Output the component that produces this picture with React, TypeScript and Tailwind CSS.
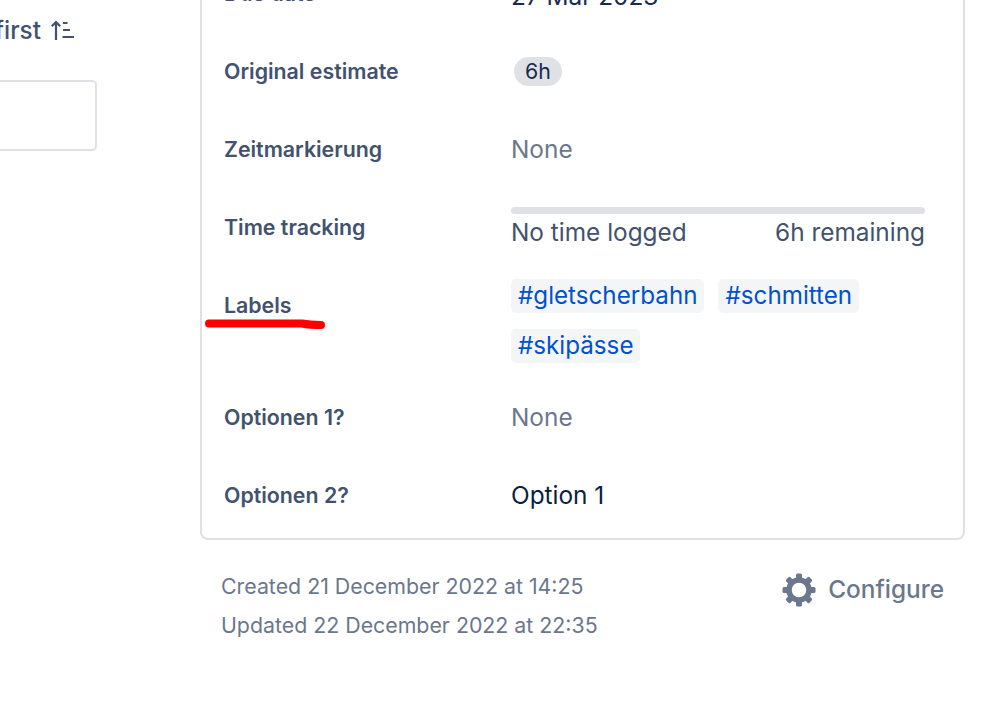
const font = { fontFamily: "Inter, 'Noto Sans', sans-serif" };

function GearIcon() {
  return (
    <svg width="34" height="34" viewBox="0 0 34 34" className="shrink-0 text-[#6b778c]">
      <circle cx="17" cy="17" r="10" fill="none" stroke="currentColor" strokeWidth="5.5" />
      {[0, 45, 90, 135, 180, 225, 270, 315].map((deg) => (
        <rect key={deg} x="14" y="0.5" width="6" height="6" rx="1.5" fill="currentColor" transform={`rotate(${deg} 17 17)`} />
      ))}
    </svg>
  );
}

function SortIcon() {
  return (
    <svg width="25" height="22" viewBox="0 0 25 22" fill="none" stroke="#42526e" strokeWidth="2.2" className="shrink-0">
      <path d="M6 21V3M1.8 7.2L6 3l4.2 4.2" />
      <path d="M13 4h4.5M13 11h7M12.5 18h11.5" />
    </svg>
  );
}

function Row({ label, children, className }: { label: string; children: React.ReactNode; className: string }) {
  return (
    <div className={`flex ${className}`}>
      <div className="w-[287px] shrink-0 text-[21.33px] font-semibold leading-[28px] text-[#42526e]">{label}</div>
      <div className="min-w-0 flex-1">{children}</div>
    </div>
  );
}

function Tag({ children }: { children: string }) {
  return <span className="rounded-[5px] bg-[#f4f5f7] px-[7px] text-[24.2px] leading-[34px] text-[#0052cc]">{children}</span>;
}

export default function App() {
  return (
    <div style={font} className="flex h-[710px] w-[999px] overflow-hidden bg-white">
      <div className="w-[200px] shrink-0 overflow-hidden pt-[14px]">
        <div className="mr-[125px] flex items-center justify-end gap-[9px]">
          <span className="whitespace-nowrap text-[24.38px] font-medium leading-[32px] text-[#42526e]">Oldest first</span>
          <SortIcon />
        </div>
        <div className="ml-[-20px] mt-[34px] h-[71px] w-[117px] rounded-[5px] border-2 border-[#dfe1e6]" />
      </div>
      <div className="w-[765px] shrink-0">
        <div className="-mt-[61px] h-[601px] rounded-[8px] border-2 border-[#dfe1e6] px-[22px] pt-[38px]">
          <Row label="Due date" className="h-[78px]">
            <div className="text-[24.38px] leading-[34px] text-[#172b4d]">27 Mar 2023</div>
          </Row>
          <Row label="Original estimate" className="h-[78px]">
            <span className="ml-[3px] inline-block rounded-full bg-[#dfe1e6] px-[11px] text-[21.33px] leading-[29px] text-[#172b4d]">6h</span>
          </Row>
          <Row label="Zeitmarkierung" className="h-[78px]">
            <div className="text-[24.38px] leading-[28px] text-[#6b778c]">None</div>
          </Row>
          <Row label="Time tracking" className="h-[78px]">
            <div className="mr-[16px]">
              <div className="mt-[-6px] h-[7px] rounded-full bg-[#dfe1e6]" />
              <div className="flex justify-between text-[24.38px] leading-[36px] text-[#42526e]">
                <span>No time logged</span>
                <span>6h remaining</span>
              </div>
            </div>
          </Row>
          <Row label="Labels" className="h-[112px]">
            <div className="-mt-[12px] flex flex-wrap gap-x-[14px] gap-y-[16px]">
              <Tag>#gletscherbahn</Tag>
              <Tag>#schmitten</Tag>
              <Tag>#skipässe</Tag>
            </div>
          </Row>
          <Row label="Optionen 1?" className="h-[78px]">
            <div className="text-[24.38px] leading-[28px] text-[#6b778c]">None</div>
          </Row>
          <Row label="Optionen 2?" className="h-[40px]">
            <div className="text-[24.38px] leading-[28px] text-[#091e42]">Option 1</div>
          </Row>
        </div>
        <div className="flex items-start justify-between pl-[21px] pr-[21px] pt-[27px]">
          <div className="text-[21.33px] leading-[39px] text-[#6b778c]">
            <div>Created 21 December 2022 at 14:25</div>
            <div>Updated 22 December 2022 at 22:35</div>
          </div>
          <div className="flex items-center gap-[12px] pt-[6px] text-[24.38px] font-medium leading-[34px] text-[#6b778c]">
            <GearIcon />
            <span className="-mt-[2px]">Configure</span>
          </div>
        </div>
      </div>
      <svg className="pointer-events-none absolute left-[204px] top-[319px]" width="122" height="11" viewBox="0 0 122 11" fill="none">
        <path d="M5 4.5H98C103 5.5 110 6 117 6" stroke="#fe0000" strokeWidth="8" strokeLinecap="round" />
      </svg>
    </div>
  );
}
